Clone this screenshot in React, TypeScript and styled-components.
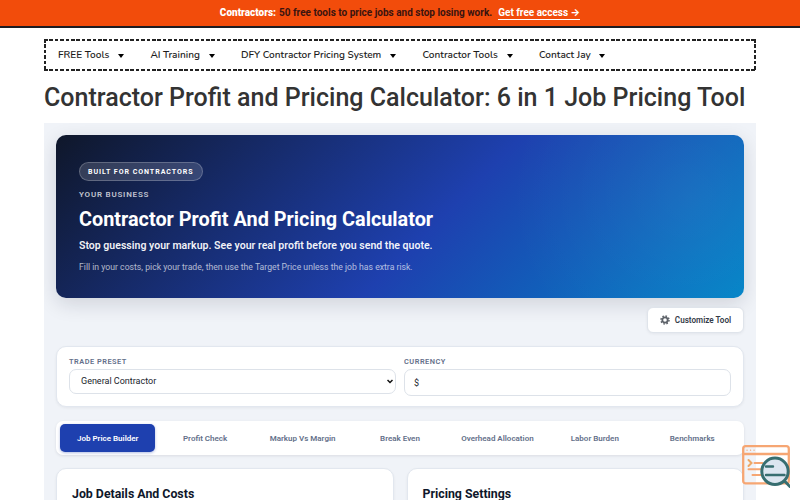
import styled, { createGlobalStyle } from 'styled-components';

const menu = ['FREE Tools', 'AI Training', 'DFY Contractor Pricing System', 'Contractor Tools', 'Contact Jay'];

const tabs = [
    'Job Price Builder',
    'Profit Check',
    'Markup Vs Margin',
    'Break Even',
    'Overhead Allocation',
    'Labor Burden',
    'Benchmarks',
];

const GearIcon = () => (
    <svg width="10" height="10" viewBox="0 0 20 20" fill="none" stroke="#5d6269">
        <circle cx="10" cy="10" r="5.4" strokeWidth="3.6" />
        <circle cx="10" cy="10" r="8" strokeWidth="3" strokeDasharray="3.14 3.14" />
    </svg>
);

const CodeSearchIcon = () => (
    <svg width="48" height="44" viewBox="0 0 48 44" fill="none" strokeLinecap="round">
        <rect x="1.2" y="2.2" width="45.6" height="37.2" rx="2.5" stroke="#f6a673" strokeWidth="2.3" />
        <path d="M1.5 10h45" stroke="#f6a673" strokeWidth="2.4" />
        <path d="M5 6.2h.1M8.5 6.2h.1M12 6.2h.1" stroke="#f6a673" strokeWidth="1.3" />
        <path d="M6.5 16l3 3-3 3" stroke="#eda765" strokeWidth="2" />
        <path d="M12.5 19h8M6.5 25.3h12M10.5 31h9" stroke="#f6a673" strokeWidth="2" />
        <circle cx="33" cy="27.3" r="13.2" fill="#dce6f0" stroke="#376e70" strokeWidth="3" />
        <path d="M24 22.5h7M24 31h18.5" stroke="#376e70" strokeWidth="2.4" />
        <path d="M43 37.5l6 6" stroke="#376e70" strokeWidth="3" />
    </svg>
);

const App = () => {
    return (
        <>
            <GlobalStyle />
            <Banner>
                <strong>Contractors:</strong>
                <BannerText>50 free tools to price jobs and stop losing work.</BannerText>
                <a href="#access">Get free access →</a>
            </Banner>
            <Page>
                <Nav>
                    {menu.map((item) => (
                        <NavItem key={item} href="#menu">
                            {item}
                            <Caret />
                        </NavItem>
                    ))}
                </Nav>
                <Title>Contractor Profit and Pricing Calculator: 6 in 1 Job Pricing Tool</Title>
                <Tool>
                    <Hero>
                        <Badge>Built for contractors</Badge>
                        <Business>Your business</Business>
                        <h2>Contractor Profit And Pricing Calculator</h2>
                        <Lead>Stop guessing your markup. See your real profit before you send the quote.</Lead>
                        <Hint>Fill in your costs, pick your trade, then use the Target Price unless the job has extra risk.</Hint>
                    </Hero>
                    <Actions>
                        <CustomizeButton>
                            <GearIcon />
                            Customize Tool
                        </CustomizeButton>
                    </Actions>
                    <Presets>
                        <Field>
                            <span>Trade preset</span>
                            <SelectWrap>
                                <select>
                                    <option>General Contractor</option>
                                </select>
                                <svg width="6" height="5" viewBox="0 0 6 5" fill="none" stroke="#111" strokeWidth="1.5">
                                    <path d="M0.5 1L3 3.5L5.5 1" />
                                </svg>
                            </SelectWrap>
                        </Field>
                        <Field>
                            <span>Currency</span>
                            <input defaultValue="$" />
                        </Field>
                    </Presets>
                    <TabBar>
                        {tabs.map((tab, i) => (
                            <Tab key={tab} $active={i === 0}>
                                {tab}
                            </Tab>
                        ))}
                    </TabBar>
                    <Panels>
                        <Panel>
                            <h3>Job Details And Costs</h3>
                        </Panel>
                        <Panel>
                            <h3>Pricing Settings</h3>
                        </Panel>
                    </Panels>
                </Tool>
            </Page>
            <Floating>
                <CodeSearchIcon />
            </Floating>
        </>
    );
};

const GlobalStyle = createGlobalStyle`
    * {
        box-sizing: border-box;
    }

    body {
        margin: 0;
        background: #fff;
        font-family: Roboto, 'Liberation Sans', sans-serif;
    }

    h1, h2, h3, p {
        margin: 0;
    }

    button, select, input {
        font-family: inherit;
    }
`;

const Banner = styled.div`
    height: 28px;
    display: flex;
    align-items: center;
    justify-content: center;
    background: #f24c0b;
    border-bottom: 2px solid #1c1c22;
    font-family: Roboto, Inter, sans-serif;
    font-size: 10px;
    font-weight: 700;
    line-height: 12px;

    strong {
        color: #fff;
    }

    a {
        color: #fff;
        text-decoration: none;
        border-bottom: 1px solid #fff;
    }
`;

const BannerText = styled.span`
    color: #3a1410;
    margin: 0 6px 0 3px;
`;

const Page = styled.main`
    width: 712px;
    margin: 11px auto 0;
`;

/* short dashes: 3.6px on, 1.8px off */
const Nav = styled.nav`
    --dash: #222 0 3.6px, transparent 3.6px 5.4px;
    height: 32px;
    padding: 0 14px;
    display: flex;
    align-items: center;
    gap: 26.4px;
    background:
        repeating-linear-gradient(90deg, var(--dash)) top / 100% 2px no-repeat,
        repeating-linear-gradient(90deg, var(--dash)) bottom / 100% 2px no-repeat,
        repeating-linear-gradient(180deg, var(--dash)) left / 2px 100% no-repeat,
        repeating-linear-gradient(180deg, var(--dash)) right / 2px 100% no-repeat;
`;

const NavItem = styled.a`
    display: flex;
    align-items: center;
    color: #1c1c1c;
    font-family: Nunito, 'Noto Sans', sans-serif;
    font-size: 10.03px;
    font-weight: 600;
    line-height: 14px;
    text-decoration: none;
    white-space: nowrap;
`;

const Caret = styled.i`
    margin: 1px 0 0 8.7px;
    border: 3.5px solid transparent;
    border-top: 4px solid #000;
    border-bottom: 0;
`;

const Title = styled.h1`
    height: 52px;
    padding-top: 2px;
    color: #333;
    font-size: 25.04px;
    font-weight: 500;
    line-height: 50px;
    white-space: nowrap;
`;

const Tool = styled.section`
    height: 377px;
    padding: 12px 12px 0 12px;
    background: #f0f3f8;
    overflow: hidden;
`;

const Hero = styled.div`
    height: 163px;
    padding: 27px 23px 0;
    display: flex;
    flex-direction: column;
    align-items: flex-start;
    border-radius: 10px;
    background:
        radial-gradient(circle at 92% 38%, rgba(255, 255, 255, 0.05), transparent 28%),
        linear-gradient(135deg, #0f172a 0%, #1e40af 55%, #0284c7 100%);
    box-shadow: 0 6px 20px rgba(15, 23, 42, 0.14);
    color: #fff;

    h2 {
        margin-top: 8px;
        font-size: 19.85px;
        font-weight: 700;
        line-height: 24px;
        white-space: nowrap;
    }
`;

const Badge = styled.span`
    height: 19px;
    padding: 0 8px;
    border: 1px solid rgba(255, 255, 255, 0.22);
    border-radius: 10px;
    background: rgba(255, 255, 255, 0.15);
    font-size: 7.05px;
    font-weight: 700;
    line-height: 17px;
    letter-spacing: 0.95px;
    text-transform: uppercase;
`;

const Business = styled.span`
    margin-top: 9px;
    color: rgba(255, 255, 255, 0.74);
    font-size: 8px;
    font-weight: 600;
    line-height: 10px;
    letter-spacing: 0.78px;
    text-transform: uppercase;
`;

const Lead = styled.p`
    margin-top: 7px;
    color: rgba(255, 255, 255, 0.95);
    font-size: 10.56px;
    font-weight: 600;
    line-height: 14px;
`;

const Hint = styled.p`
    margin-top: 8px;
    color: rgba(255, 255, 255, 0.68);
    font-size: 8.67px;
    line-height: 12px;
`;

const Actions = styled.div`
    margin-top: 9px;
    display: flex;
    justify-content: flex-end;
`;

const CustomizeButton = styled.button`
    width: 97px;
    height: 26px;
    padding: 0;
    display: flex;
    align-items: center;
    justify-content: center;
    gap: 5px;
    border: 1px solid #dfe4eb;
    border-radius: 6px;
    background: #fff;
    box-shadow: 0 1px 3px rgba(15, 23, 42, 0.06);
    color: #343b48;
    font-size: 8.15px;
    font-weight: 600;
    white-space: nowrap;
`;

const Presets = styled.div`
    height: 61px;
    margin-top: 13px;
    padding: 9px 12px;
    display: flex;
    gap: 8px;
    border: 1px solid #e2e7ef;
    border-radius: 10px;
    background: #fff;
    box-shadow: 0 1px 3px rgba(15, 23, 42, 0.06);
`;

const Field = styled.label`
    flex: 1;
    display: flex;
    flex-direction: column;

    span {
        margin-bottom: 2px;
        color: #64708a;
        font-size: 7.4px;
        font-weight: 600;
        line-height: 11px;
        letter-spacing: 0.5px;
        text-transform: uppercase;
    }

    select,
    input {
        display: block;
        width: 100%;
        border: 1px solid #dde2e9;
        border-radius: 7px;
        background: #fff;
        color: #20242c;
        font-size: 9px;
        outline: none;
    }

    select {
        appearance: none;
        height: 25px;
        padding: 0 11px 1px;
    }

    input {
        height: 27px;
        padding: 0 9px;
    }
`;

const SelectWrap = styled.div`
    position: relative;

    svg {
        position: absolute;
        right: 3px;
        top: 10px;
        pointer-events: none;
    }
`;

const TabBar = styled.div`
    height: 34px;
    margin-top: 14px;
    padding: 3px 4px;
    display: flex;
    gap: 2px;
    border-radius: 7px;
    background: #fff;
    box-shadow: 0 1px 3px rgba(15, 23, 42, 0.1);
`;

const Tab = styled.button<{ $active: boolean }>`
    flex: 1 1 0;
    height: 28px;
    padding: 1px 0 0;
    border: 0;
    border-radius: 5px;
    background: ${(props) => (props.$active ? '#1e40af' : 'transparent')};
    box-shadow: ${(props) => (props.$active ? '0 1px 3px rgba(30, 64, 175, 0.35)' : 'none')};
    color: ${(props) => (props.$active ? '#fff' : '#64708a')};
    font-size: 8px;
    font-weight: 600;
    white-space: nowrap;
`;

const Panels = styled.div`
    margin-top: 13px;
    display: flex;
    gap: 13px;
`;

const Panel = styled.div`
    flex: 1;
    height: 120px;
    padding: 17px 15px;
    border: 1px solid #e2e7ef;
    border-radius: 10px;
    background: #fff;
    box-shadow: 0 1px 3px rgba(15, 23, 42, 0.06);

    h3 {
        color: #0f172a;
        font-size: 12.35px;
        font-weight: 700;
        line-height: 16px;
    }
`;

const Floating = styled.div`
    position: fixed;
    right: 10px;
    bottom: 12px;
    width: 48px;
    height: 44px;

    svg {
        display: block;
    }
`;

export default App;
